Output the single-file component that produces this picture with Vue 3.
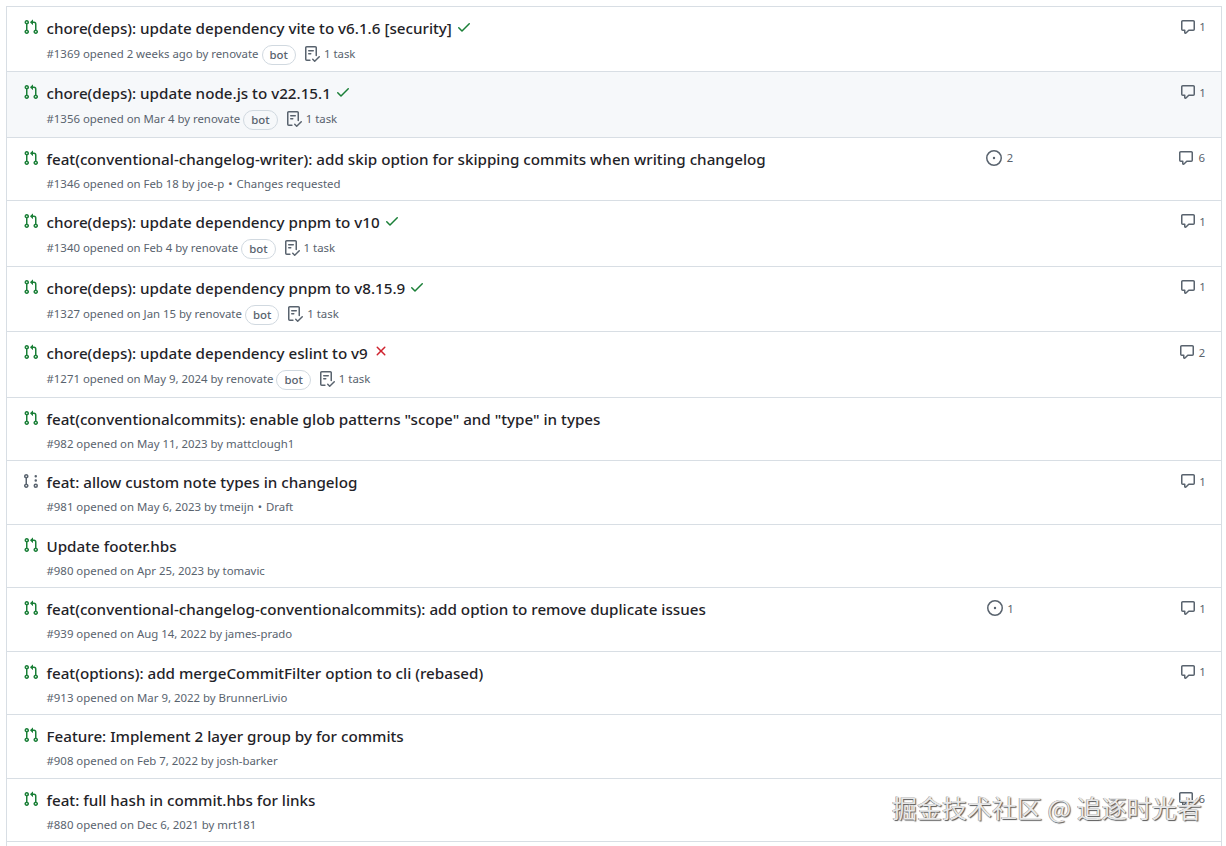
<script setup>
const PR = 'M1.5 3.25a2.25 2.25 0 1 1 3 2.122v5.256a2.251 2.251 0 1 1-1.5 0V5.372A2.25 2.25 0 0 1 1.5 3.25Zm5.677-.177L9.573.677A.25.25 0 0 1 10 .854V2.5h1A2.5 2.5 0 0 1 13.5 5v5.628a2.251 2.251 0 1 1-1.5 0V5a1 1 0 0 0-1-1h-1v1.646a.25.25 0 0 1-.427.177L7.177 3.427a.25.25 0 0 1 0-.354ZM3.75 2.5a.75.75 0 1 0 0 1.5.75.75 0 0 0 0-1.5Zm0 9.5a.75.75 0 1 0 0 1.5.75.75 0 0 0 0-1.5Zm8.25.75a.75.75 0 1 0 1.5 0 .75.75 0 0 0-1.5 0Z'
const DRAFT = 'M3.25 1A2.25 2.25 0 0 1 4 5.372v5.256a2.251 2.251 0 1 1-1.5 0V5.372A2.251 2.251 0 0 1 3.25 1Zm9.5 14a2.25 2.25 0 1 1 0-4.5 2.25 2.25 0 0 1 0 4.5ZM2.5 3.25a.75.75 0 1 0 1.5 0 .75.75 0 0 0-1.5 0ZM3.25 12a.75.75 0 1 0 0 1.5.75.75 0 0 0 0-1.5Zm9.5 0a.75.75 0 1 0 0 1.5.75.75 0 0 0 0-1.5ZM14 7.5a1.25 1.25 0 1 1-2.5 0 1.25 1.25 0 0 1 2.5 0Zm0-4.25a1.25 1.25 0 1 1-2.5 0 1.25 1.25 0 0 1 2.5 0Z'
const CHECK = 'M13.78 4.22a.75.75 0 0 1 0 1.06l-7.25 7.25a.75.75 0 0 1-1.06 0L2.22 9.28a.751.751 0 0 1 .018-1.042.751.751 0 0 1 1.042-.018L6 10.94l6.72-6.72a.75.75 0 0 1 1.06 0Z'
const CROSS = 'M3.72 3.72a.75.75 0 0 1 1.06 0L8 6.94l3.22-3.22a.749.749 0 0 1 1.275.326.749.749 0 0 1-.215.734L9.06 8l3.22 3.22a.749.749 0 0 1-.326 1.275.749.749 0 0 1-.734-.215L8 9.06l-3.22 3.22a.751.751 0 0 1-1.042-.018.751.751 0 0 1-.018-1.042L6.94 8 3.72 4.78a.75.75 0 0 1 0-1.06Z'
const COMMENT = 'M1 2.75C1 1.784 1.784 1 2.75 1h10.5c.966 0 1.75.784 1.75 1.75v7.5A1.75 1.75 0 0 1 13.25 12H9.06l-2.573 2.573A1.458 1.458 0 0 1 4 13.543V12H2.75A1.75 1.75 0 0 1 1 10.25Zm1.75-.25a.25.25 0 0 0-.25.25v7.5c0 .138.112.25.25.25h2a.75.75 0 0 1 .75.75v2.19l2.72-2.72a.749.749 0 0 1 .53-.22h4.5a.25.25 0 0 0 .25-.25v-7.5a.25.25 0 0 0-.25-.25Z'
const ISSUE = 'M8 9.2a1.2 1.2 0 1 0 0-2.4 1.2 1.2 0 0 0 0 2.4ZM8 0a8 8 0 1 1 0 16A8 8 0 0 1 8 0ZM1.5 8a6.5 6.5 0 1 0 13 0 6.5 6.5 0 0 0-13 0Z'
const TASK = 'M2.5 1.75v11.5c0 .138.112.25.25.25h3.17a.75.75 0 0 1 0 1.5H2.75A1.75 1.75 0 0 1 1 13.25V1.75C1 .784 1.784 0 2.75 0h8.5C12.216 0 13 .784 13 1.75v7.736a.75.75 0 0 1-1.5 0V1.75a.25.25 0 0 0-.25-.25h-8.5a.25.25 0 0 0-.25.25Zm13.274 9.537v-.001l-4.557 4.45a.75.75 0 0 1-1.055-.008l-1.943-1.95a.75.75 0 0 1 1.062-1.058l1.419 1.425 4.026-3.932a.75.75 0 1 1 1.048 1.074ZM4.75 4h4.5a.75.75 0 0 1 0 1.5h-4.5a.75.75 0 0 1 0-1.5ZM4 7.75A.75.75 0 0 1 4.75 7h2a.75.75 0 0 1 0 1.5h-2A.75.75 0 0 1 4 7.75Z'

const rows = [
  { title: 'chore(deps): update dependency vite to v6.1.6 [security]', status: 'ok', meta: '#1369 opened 2 weeks ago by renovate', bot: true, comments: 1 },
  { title: 'chore(deps): update node.js to v22.15.1', status: 'ok', meta: '#1356 opened on Mar 4 by renovate', bot: true, comments: 1, hover: true },
  { title: 'feat(conventional-changelog-writer): add skip option for skipping commits when writing changelog', meta: '#1346 opened on Feb 18 by joe-p', note: 'Changes requested', issues: 2, comments: 6 },
  { title: 'chore(deps): update dependency pnpm to v10', status: 'ok', meta: '#1340 opened on Feb 4 by renovate', bot: true, comments: 1 },
  { title: 'chore(deps): update dependency pnpm to v8.15.9', status: 'ok', meta: '#1327 opened on Jan 15 by renovate', bot: true, comments: 1 },
  { title: 'chore(deps): update dependency eslint to v9', status: 'fail', meta: '#1271 opened on May 9, 2024 by renovate', bot: true, comments: 2 },
  { title: 'feat(conventionalcommits): enable glob patterns "scope" and "type" in types', meta: '#982 opened on May 11, 2023 by mattclough1' },
  { title: 'feat: allow custom note types in changelog', meta: '#981 opened on May 6, 2023 by tmeijn', note: 'Draft', draft: true, comments: 1 },
  { title: 'Update footer.hbs', meta: '#980 opened on Apr 25, 2023 by tomavic' },
  { title: 'feat(conventional-changelog-conventionalcommits): add option to remove duplicate issues', meta: '#939 opened on Aug 14, 2022 by james-prado', issues: 1, comments: 1 },
  { title: 'feat(options): add mergeCommitFilter option to cli (rebased)', meta: '#913 opened on Mar 9, 2022 by BrunnerLivio', comments: 1 },
  { title: 'Feature: Implement 2 layer group by for commits', meta: '#908 opened on Feb 7, 2022 by josh-barker' },
  { title: 'feat: full hash in commit.hbs for links', meta: '#880 opened on Dec 6, 2021 by mrt181', comments: 6 },
]
</script>

<template>
  <div class="page">
    <div class="list">
      <div v-for="r in rows" :key="r.meta" class="row" :class="{ hover: r.hover }">
        <svg class="state" :class="{ draft: r.draft }" viewBox="0 0 16 16" width="16" height="16"><path :d="r.draft ? DRAFT : PR" /></svg>
        <div class="main">
          <div class="title">
            <span>{{ r.title }}</span>
            <svg v-if="r.status === 'ok'" class="ok" viewBox="0 0 16 16" width="16" height="16"><path :d="CHECK" /></svg>
            <svg v-if="r.status === 'fail'" class="fail" viewBox="0 0 16 16" width="16" height="16"><path :d="CROSS" /></svg>
          </div>
          <div class="meta">
            <span>{{ r.meta }}</span>
            <span v-if="r.bot" class="bot">bot</span>
            <span v-if="r.note" class="note"><i class="dot">•</i>{{ r.note }}</span>
            <span v-if="r.bot" class="task">
              <svg viewBox="0 0 16 16" width="16" height="16"><path :d="TASK" /></svg>
              1 task
            </span>
          </div>
        </div>
        <div class="col issues">
          <template v-if="r.issues">
            <svg viewBox="0 0 16 16" width="16" height="16"><path :d="ISSUE" /></svg>
            <span>{{ r.issues }}</span>
          </template>
        </div>
        <div class="col comments">
          <template v-if="r.comments">
            <svg viewBox="0 0 16 16" width="16" height="16"><path :d="COMMENT" /></svg>
            <span>{{ r.comments }}</span>
          </template>
        </div>
      </div>
    </div>
    <div class="watermark">掘金技术社区 @ 追逐时光者</div>
  </div>
</template>

<style>
html, body { margin: 0; background: #fff; overflow: hidden; }
</style>

<style scoped>
.page {
  position: relative;
  height: 846px;
  padding: 5.5px 4px 0 6px;
  box-sizing: border-box;
  overflow: hidden;
  font-family: "Noto Sans", "Open Sans", sans-serif;
  color: #1f2328;
}
.list {
  height: 841px;
  box-sizing: border-box;
  border: 1px solid #d8dee4;
  border-bottom: 0;
  overflow: hidden;
}
.row {
  display: flex;
  align-items: flex-start;
  box-sizing: border-box;
  padding: 8px 16px 6.5px 16px;
  border-bottom: 1px solid #d8dee4;
}
.row.hover { background: #f6f8fa; }
.state { flex: none; margin-top: 4px; fill: #1a7f37; }
.state.draft { fill: #59636e; }
.main { flex: 1; min-width: 0; margin-left: 7.5px; }
.title {
  display: flex;
  align-items: center;
  gap: 5px;
  height: 26px;
  font-size: 15.2px;
  font-weight: 500;
  line-height: 26px;
}
.ok { fill: #1a7f37; margin-top: -2px; margin-left: -1px; }
.fail { fill: #cf222e; margin-top: -4px; }
.meta {
  display: flex;
  align-items: center;
  min-height: 20px;
  margin-top: 2px;
  font-size: 11.4px;
  line-height: 20px;
  color: #59636e;
}
.bot {
  box-sizing: border-box;
  height: 20px;
  margin-left: 3px;
  padding: 0 7px;
  border: 1px solid #d1d9e0;
  border-radius: 10px;
  font-weight: 500;
  line-height: 18px;
  margin-top: 2px;
}
.note { display: inline-flex; align-items: center; }
.dot { font-style: normal; margin: 0 4px; }
.task { display: inline-flex; align-items: center; gap: 4px; margin-left: 8px; }
.task svg { fill: #59636e; }
.col {
  flex: none;
  display: flex;
  align-items: center;
  justify-content: flex-end;
  gap: 4px;
  height: 24px;
  font-size: 11.4px;
  font-variant-numeric: proportional-nums;
  color: #59636e;
}
.col svg { fill: #59636e; }
.issues { width: 100px; gap: 5px; }
.comments { width: 192px; }
.watermark {
  position: absolute;
  left: 892px;
  top: 790px;
  font-family: "Noto Sans CJK SC", sans-serif;
  font-size: 25px;
  line-height: 34px;
  white-space: nowrap;
  color: #e8e8e8;
  text-shadow: 1px 1px 1px #555, -0.5px -0.5px 0 #888;
}
</style>
